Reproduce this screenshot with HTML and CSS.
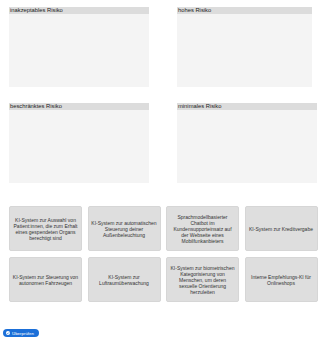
FILE: index.html
```html
<!DOCTYPE html>
<html lang="de">
<head>
    <meta charset="UTF-8">
    <meta name="viewport" content="width=device-width, initial-scale=1.0">
    <title>Risikoklassen</title>
    <link rel="stylesheet" href="styles.css">
</head>
<body>
    <div class="page">
        <div class="zones">
            <div class="zone">
                <div class="zone-title">inakzeptables Risiko</div>
                <div class="zone-body"></div>
            </div>
            <div class="zone zone-narrow">
                <div class="zone-title">hohes Risiko</div>
                <div class="zone-body"></div>
            </div>
            <div class="zone">
                <div class="zone-title">beschränktes Risiko</div>
                <div class="zone-body"></div>
            </div>
            <div class="zone">
                <div class="zone-title">minimales Risiko</div>
                <div class="zone-body"></div>
            </div>
        </div>

        <div class="cards">
            <div class="card">KI-System zur Auswahl von Patient:innen, die zum Erhalt eines gespendeten Organs berechtigt sind</div>
            <div class="card">KI-System zur automatischen Steuerung deiner Außenbeleuchtung</div>
            <div class="card">Sprachmodellbasierter Chatbot im Kundensupporteinsatz auf der Webseite eines Mobilfunkanbieters</div>
            <div class="card">KI-System zur Kreditvergabe</div>
            <div class="card">KI-System zur Steuerung von autonomen Fahrzeugen</div>
            <div class="card">KI-System zur Luftraumüberwachung</div>
            <div class="card">KI-System zur biometrischen Kategorisierung von Menschen, um deren sexuelle Orientierung herzuleiten</div>
            <div class="card">Interne Empfehlungs-KI für Onlineshops</div>
        </div>

        <button class="check-btn">
            <svg width="4" height="4" viewBox="0 0 10 10"><circle cx="5" cy="5" r="5" fill="#fff"/><path d="M2.5 5.2l1.8 1.8 3.4-3.6" stroke="#1b6fd8" stroke-width="1.6" fill="none"/></svg>
            Überprüfen
        </button>
    </div>
</body>
</html>
```

FILE: styles.css
```css
body {
    margin: 0;
    font-family: "Liberation Sans", Arial, sans-serif;
    background-color: #fff;
    color: #333;
}
.page {
    width: 320px;
    padding-top: 7px;
}
.zones {
    display: grid;
    grid-template-columns: 140px 140px;
    column-gap: 28px;
    row-gap: 16px;
    padding-left: 9px;
}
.zone {
    display: flex;
    flex-direction: column;
    height: 80px;
    background-color: #f4f4f4;
}
.zone-narrow {
    margin-right: 5px;
}
.zone-title {
    height: 7px;
    line-height: 7px;
    font-size: 5.8px;
    padding-left: 1px;
    background-color: #dcdcdc;
    color: #222;
    white-space: nowrap;
}
.zone-body {
    flex: 1;
}
.cards {
    display: grid;
    grid-template-columns: repeat(4, 73px);
    grid-auto-rows: 45px;
    column-gap: 5.5px;
    row-gap: 6px;
    padding-left: 9px;
    margin-top: 23px;
}
.card {
    display: flex;
    align-items: center;
    justify-content: center;
    text-align: center;
    padding: 0 2.5px;
    background-color: #dedede;
    border: 1px solid #d6d6d6;
    border-radius: 2px;
    font-size: 5px;
    line-height: 6px;
    color: #333;
    box-sizing: border-box;
}
.check-btn {
    display: flex;
    align-items: center;
    gap: 2px;
    margin: 27px 0 0 3px;
    height: 8px;
    padding: 0 5px 0 3px;
    background-color: #1b6fd8;
    color: #fff;
    border: none;
    border-radius: 4px;
    font-family: "Liberation Sans", Arial, sans-serif;
    font-size: 4.4px;
    cursor: pointer;
}
```
